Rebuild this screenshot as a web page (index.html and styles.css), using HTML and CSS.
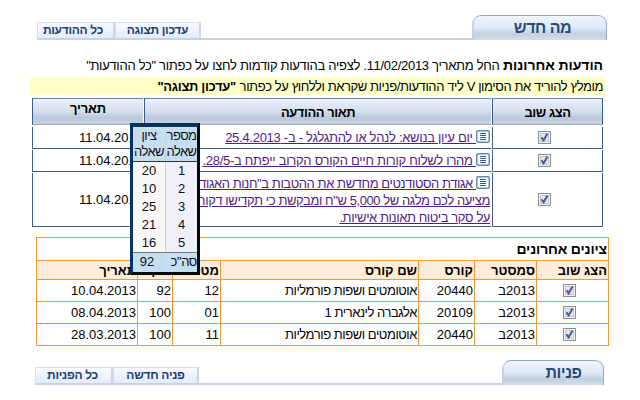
FILE: index.html
```html
<!DOCTYPE html>
<html lang="he" dir="rtl">
<head>
<meta charset="utf-8">
<title>מה חדש</title>
<link rel="stylesheet" href="styles.css">
</head>
<body>
<svg class="defs" width="0" height="0">
  <symbol id="check" viewBox="0 0 13 13">
    <rect x=".5" y=".5" width="12" height="12" fill="#f4f4f4" stroke="#8e8f8f"/>
    <rect x="2.5" y="2.5" width="8" height="8" fill="#e3e6eb" stroke="#c3c8d0"/>
    <path d="M3.5 6.2 L5.6 9.3 L9.5 2.5" fill="none" stroke="#4a5f97" stroke-width="2"/>
  </symbol>
  <symbol id="note" viewBox="0 0 14 13">
    <rect x=".75" y=".75" width="12.5" height="11.5" rx="1.5" fill="#fff" stroke="#6288b8" stroke-width="1.5"/>
    <path d="M4 3.5h6M4 5.5h6M4 7.5h6M4 9.5h6" stroke="#2c5c9c"/>
  </symbol>
</svg>
<header class="bar bar-news">
  <h2 class="tab"><span>מה חדש</span></h2>
  <nav class="links"><a class="l1">עדכון תצוגה</a><a class="l2">כל ההודעות</a></nav>
</header>
<p class="intro"><b>הודעות אחרונות</b> <span>החל מתאריך 11/02/2013. לצפיה בהודעות קודמות לחצו על כפתור "כל ההודעות"</span></p>
<p class="tip"><span>מומלץ להוריד את הסימון V ליד ההודעות/פניות שקראת וללחוץ על כפתור</span> <b>"עדכון תצוגה"</b></p>
<section class="news">
  <div class="th">הצג שוב</div><div class="th">תאור ההודעה</div><div class="th date">תאריך</div>
  <div class="ck"><svg><use href="#check"/></svg></div>
  <div class="desc"><a><svg><use href="#note"/></svg><span class="d1"> יום עיון בנושא: לנהל או להתגלגל - ב- 25.4.2013</span></a></div>
  <div class="when">11.04.2013</div>
  <div class="ck"><svg><use href="#check"/></svg></div>
  <div class="desc"><a><svg><use href="#note"/></svg><span class="d2"> מהרו לשלוח קורות חיים הקורס הקרוב ייפתח ב-28/5.</span></a></div>
  <div class="when">11.04.2013</div>
  <div class="ck"><svg><use href="#check"/></svg></div>
  <div class="desc"><a><svg><use href="#note"/></svg><span class="d3"> אגודת הסטודנטים מחדשת את ההטבות ב"חנות האגודה</span><br><span class="d3">מציעה לכם מלגה של 5,000 ש"ח ומבקשת כי תקדישו דקות</span><br><span class="d3">על סקר ביטוח תאונות אישיות.</span></a></div>
  <div class="when">11.04.2013</div>
</section>
<section class="grades">
  <h3><span>ציונים אחרונים</span></h3>
  <div class="row head"><div>הצג שוב</div><div>סמסטר</div><div>קורס</div><div>שם קורס</div><div>מטלה</div><div>ציון</div><div>תאריך</div></div>
  <div class="row"><div class="ck"><svg><use href="#check"/></svg></div><div>2013ב</div><div>20440</div><div class="name">אוטומטים ושפות פורמליות</div><div>12</div><div>92</div><div>10.04.2013</div></div>
  <div class="row"><div class="ck"><svg><use href="#check"/></svg></div><div>2013ב</div><div>20109</div><div class="name">אלגברה לינארית 1</div><div>01</div><div>100</div><div>08.04.2013</div></div>
  <div class="row"><div class="ck"><svg><use href="#check"/></svg></div><div>2013ב</div><div>20440</div><div class="name">אוטומטים ושפות פורמליות</div><div>11</div><div>100</div><div>28.03.2013</div></div>
</section>
<footer class="bar bar-req">
  <h2 class="tab"><span>פניות</span></h2>
  <nav class="links"><a class="l3">פניה חדשה</a><a class="l4">כל הפניות</a></nav>
</footer>
<aside class="popup">
  <div class="prow ptop"><div>מספר<br>שאלה</div><div>ציון<br>שאלה</div></div>
  <div class="prow"><div>1</div><div>20</div></div>
  <div class="prow"><div>2</div><div>10</div></div>
  <div class="prow"><div>3</div><div>25</div></div>
  <div class="prow"><div>4</div><div>21</div></div>
  <div class="prow"><div>5</div><div>16</div></div>
  <div class="prow ptotal"><div>סה"כ</div><div>92</div></div>
</aside>
</body>
</html>
```
FILE: styles.css
```css
* { box-sizing: border-box; }
body { margin: 0; width: 640px; height: 400px; overflow: hidden; position: relative; background: #fff; color: #000; font: 13px/17px "Liberation Sans", Arial, sans-serif; white-space: nowrap; }
.defs { position: absolute; }
h2, h3, p { margin: 0; }

.bar { display: flex; justify-content: space-between; align-items: flex-end; height: 25px; border-bottom: 2px solid #c8d3e2; }
.bar-news { margin: 15px 33px 0 37px; }
.bar-req { margin: 14px 36px 0 35px; }
.tab { width: 135px; height: 25px; margin-bottom: -2px; border: 1px solid #94aac0; border-bottom: 0; border-left: 2px solid #c8d3e2; border-radius: 9px 9px 0 0; background: linear-gradient(#f0f5fd, #dfe9f9 48%, #c2d0e0 75%, #d3deeb); color: #274b77; font-size: 16px; letter-spacing: -0.5px; line-height: 23px; text-align: center; }
.bar-news .tab { padding-left: 5px; }
.bar-req .tab { width: 102px; padding-left: 20px; }
.links { display: flex; height: 16px; }
.links a { border: 1px solid #d3e0ef; border-right: 2px solid #ccd6e4; border-bottom: 0; background: linear-gradient(#f8faff, #e3ebfa); color: #1f4272; font-size: 12px; letter-spacing: -0.3px; font-weight: bold; line-height: 15px; text-align: center; }
.l1, .l3 { width: 86px; }
.l2, .l4 { width: 78px; }
.l2 { padding-right: 5px; }
.l4 { padding-right: 2px; }

.intro { height: 37px; padding: 17px 37px 0 0; }
.intro b { font-size: 14px; letter-spacing: -0.05px; }
.intro span { letter-spacing: -0.3px; }
.tip { width: 575px; height: 18px; margin-right: 35px; padding-right: 2px; background: #ffffc8; line-height: 19px; }
.tip span { letter-spacing: -0.41px; }
.tip b { letter-spacing: -0.3px; }

.news { display: grid; grid-template-columns: 111px 347px 111px; grid-template-rows: 28px 22px 22px 54px; gap: 1px; margin: 3px 37px 0 32px; }
.news > div { border-left: 1px solid #3c5e8c; border-bottom: 1px solid #3c5e8c; }
.news > .ck { border-right: 1px solid #3c5e8c; display: flex; align-items: center; justify-content: center; padding-right: 7px; }
.news > .th { margin-bottom: 1px; border-top: 1px solid #6c87a8; border-bottom-color: #a5abb5; background: linear-gradient(#ebf1fb, #d4deec 50%, #bac8d9 75%, #c6d3e3); font-weight: bold; letter-spacing: -0.45px; text-align: center; line-height: 28px; }
.news > .th:first-child { border-right: 1px solid #3c5e8c; }
.news > .date { line-height: 19px; letter-spacing: -0.2px; }
.news .desc { padding: 2px 1px 0 0; }
.news a { color: #551a8b; text-decoration: underline; }
.d1, .d2 { letter-spacing: -0.28px; }
.d3 { letter-spacing: -0.42px; }
.desc svg { width: 14px; height: 13px; vertical-align: -1px; }
.ck svg { width: 13px; height: 13px; display: block; }
.when { display: flex; align-items: center; }

.grades { width: 573px; margin: 10px 31px 0 0; border: 1px solid #ef9b35; }
.grades h3 { height: 22px; font-size: 14px; letter-spacing: -0.15px; line-height: 22px; padding-right: 1px; }
.row { display: grid; grid-template-columns: 72px 62px 56px 198px 48px 35px 100px; height: 22px; border-top: 1px solid #ef9b35; line-height: 21px; }
.row > div { padding-right: 1px; border-left: 1px solid #ef9b35; }
.row > div:last-child { border-left: 0; }
.row > .ck { padding: 4px 32px 0 0; }
.row > .name { letter-spacing: -0.45px; }
.head { height: 19px; background: #fdecd9; font-weight: bold; line-height: 20px; }
.head > div { height: 18px; }

.popup { position: absolute; left: 130px; top: 123px; width: 70px; height: 152px; border: 3px solid #003366; border-right-color: #000a14; border-bottom-color: #000a14; background: #d0ced8; color: #111; line-height: 18px; text-align: center; }
.prow { display: grid; grid-template-columns: 31px 32px; gap: 1px; height: 18px; border-bottom: 1px solid #d0ced8; }
.prow > div { background: #f8f8f8; }
.prow > div:first-child { background: #efeffa; }
.prow.ptop { height: 36px; border: 1px solid #333; border-width: 1px 0; line-height: 16px; letter-spacing: -0.6px; }
.prow.ptop > div { padding-top: 1px; }
.prow.ptop > div, .prow.ptotal > div { background: #c5def2; }
.prow.ptotal { height: 20px; border-top: 1px solid #777; border-bottom: 0; grid-template-columns: 35px 28px; }
.prow.ptotal > div:first-child { text-align: right; letter-spacing: -0.4px; }
```
